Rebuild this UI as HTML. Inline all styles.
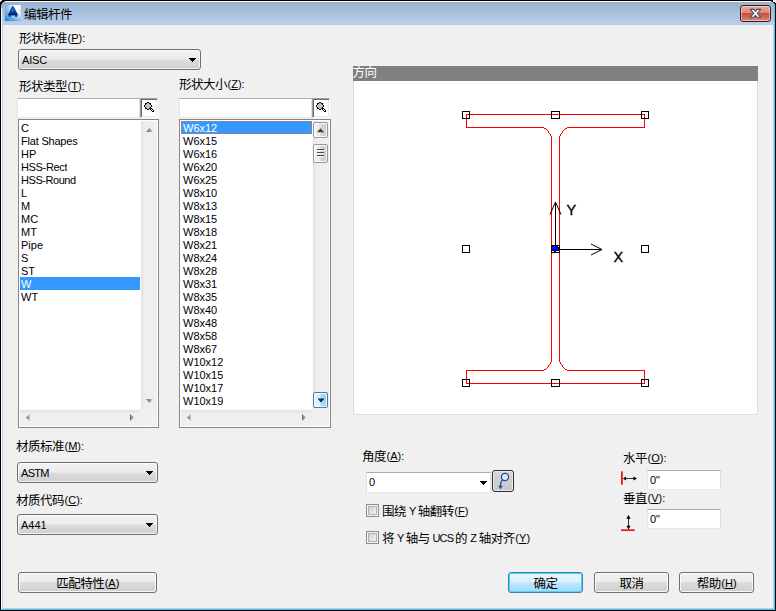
<!DOCTYPE html>
<html lang="zh-CN">
<head>
<meta charset="utf-8">
<title>编辑杆件</title>
<style>
*{box-sizing:border-box;margin:0;padding:0}
html,body{width:776px;height:611px;overflow:hidden;background:#000}
body{position:relative;font-family:"Liberation Sans","Noto Sans CJK SC",sans-serif;font-size:12px;color:#000;line-height:1}
.abs{position:absolute}
#win{position:absolute;left:0;top:0;width:776px;height:611px;background:#000;overflow:hidden}
#frame{position:absolute;left:1px;top:1px;width:774px;height:609px;background:#b9d1ea;border-radius:6px 6px 0 0;overflow:hidden}
#titlebar{position:absolute;left:0;top:0;width:774px;height:24px;background:linear-gradient(#ffffff 0,#ffffff 1px,#98b3d0 1px,#b9d1ea 24px)}
#client{position:absolute;left:3px;top:25px;width:770px;height:583px;background:#f0f0f0}
.lbl{position:absolute;white-space:nowrap;font-size:12.5px;letter-spacing:-.5px;line-height:14px;height:14px}
.lbl u{text-decoration:underline;text-underline-offset:1px}
b{font-weight:normal;font-size:11px;letter-spacing:0;position:relative;top:-1px;left:.5px}
.t11{font-size:11px}
.combo{position:absolute;border:1px solid #707070;border-radius:3px;background:linear-gradient(#f2f2f2 0,#ebebeb 48%,#dddddd 52%,#cfcfcf 100%);box-shadow:inset 0 0 0 1px rgba(255,255,255,.75)}
.combo span{position:absolute;left:3px;top:4px;font-size:11px;line-height:13px}
.combo i,.edit i{position:absolute;right:7px;top:11px;width:1px;height:1px;background:#000;box-shadow:-3px -3px 0 #000,-2px -3px 0 #000,-1px -3px 0 #000,0px -3px 0 #000,1px -3px 0 #000,2px -3px 0 #000,3px -3px 0 #000,-2px -2px 0 #000,-1px -2px 0 #000,0px -2px 0 #000,1px -2px 0 #000,2px -2px 0 #000,-1px -1px 0 #000,0px -1px 0 #000,1px -1px 0 #000}
.btn{position:absolute;border:1px solid #707070;border-radius:3px;background:linear-gradient(#f2f2f2 0,#ebebeb 47%,#dddddd 48%,#cfcfcf 100%);box-shadow:inset 0 0 0 1px rgba(255,255,255,.8);text-align:center;font-size:12.5px;letter-spacing:-.5px;line-height:19px;padding-top:2px;white-space:nowrap}
.btn.def{border-color:#3c7fb1;background:linear-gradient(#eaf6fd 0,#d9f0fc 48%,#bee6fd 52%,#a7d9f5 100%);box-shadow:inset 0 0 0 1px #48d8fb}
.edit{position:absolute;background:#fff;border:1px solid #e3e9ef;border-top-color:#abadb3;border-left-color:#e2e3ea;border-right-color:#dbdfe6}
.sbtn{position:absolute;background:#fff;border-left:1px solid #a0a0a0;border-top:1px solid #a0a0a0;border-right:1px solid #fff;border-bottom:1px solid #fff;box-shadow:inset 1px 1px 0 #696969,inset -1px -1px 0 #e9e9e9}
.list{position:absolute;background:#fff;border:1px solid #828790;overflow:hidden}
.list .it{position:absolute;left:1px;height:13px;font-size:11px;line-height:15px;padding-left:2px;white-space:nowrap;overflow:hidden}
#list1 .it{padding-left:1px}
.list .sel{background:#3399ff;color:#fff}
.vtrack{position:absolute;background:linear-gradient(90deg,#fbfbfb 0,#fbfbfb 1px,#e3e3e3 1px,#eeeeee 5px,#f0f0f0 100%)}
.htrack{position:absolute;background:linear-gradient(#fbfbfb 0,#fbfbfb 1px,#e3e3e3 1px,#eeeeee 5px,#f0f0f0 100%)}
.scb{position:absolute;border:1px solid #979797;border-radius:2px;background:linear-gradient(90deg,#f3f3f3 0,#e8e8e8 48%,#d6d6d6 52%,#cbcbcb 100%);box-shadow:inset 0 0 0 1px rgba(255,255,255,.85)}
.scb.hot{border-color:#3c7fb1;background:linear-gradient(90deg,#e3f4fc 0,#d6effc 48%,#a9dbf6 52%,#9cd3f1 100%)}
.cb{position:absolute;width:13px;height:13px;border:1px solid #8e8f8f;background:#f4f4f4;box-shadow:inset 0 0 0 1px #f4f4f4,inset 0 0 0 2px #aeb3b9}
.cb:after{content:"";position:absolute;left:2px;top:2px;width:7px;height:7px;background:linear-gradient(135deg,#cfd0d2 0,#f3f3f3 100%)}
svg{position:absolute;overflow:visible}
</style>
</head>
<body>
<div id="win">
<div class="abs" style="left:0;top:0;width:2px;height:1px;background:#e8e8e8"></div><div class="abs" style="left:0;top:1px;width:1px;height:1px;background:#e8e8e8"></div><div class="abs" style="left:773px;top:0;width:3px;height:2px;background:#f4f4f4"></div><div class="abs" style="left:775px;top:2px;width:1px;height:1px;background:#e8e8e8"></div>
<div id="frame">
<div id="titlebar"></div>
</div>
<div class="abs" style="left:774px;top:4px;width:1px;height:606px;background:#3ec9f6"></div>
<div class="abs" style="left:1px;top:609px;width:774px;height:1px;background:#2fd0f2"></div>
<div class="abs" style="left:1px;top:8px;width:1px;height:601px;background:#fdfeff"></div>
<div id="client"></div>

<!-- title -->
<svg id="appicon" style="left:5px;top:5px" width="16" height="16" viewBox="0 0 16 16">
<defs><linearGradient id="ig" x1="0" y1="0" x2="1" y2=".25"><stop offset="0" stop-color="#6d90c0"/><stop offset=".5" stop-color="#f4f8fd"/><stop offset=".8" stop-color="#ffffff"/><stop offset="1" stop-color="#dbe8f7"/></linearGradient>
<linearGradient id="ig2" x1="0" y1="1" x2=".75" y2="0"><stop offset="0" stop-color="#127ad6"/><stop offset=".3" stop-color="#4f9fe2" stop-opacity=".85"/><stop offset=".62" stop-color="#9cc6ee" stop-opacity=".35"/><stop offset=".8" stop-color="#ffffff" stop-opacity="0"/></linearGradient>
<linearGradient id="ig3" x1="0" y1="0" x2="0" y2="1"><stop offset=".6" stop-color="#a9cbee" stop-opacity="0"/><stop offset="1" stop-color="#8fbdea" stop-opacity=".9"/></linearGradient>
<linearGradient id="ag" x1="0" y1="0" x2="0" y2="1"><stop offset="0" stop-color="#0f62bd"/><stop offset=".45" stop-color="#0a47a3"/><stop offset=".8" stop-color="#071f55"/><stop offset=".84" stop-color="#0a3f9c"/><stop offset="1" stop-color="#0d55b8"/></linearGradient></defs>
<rect width="16" height="16" fill="url(#ig)"/><rect width="16" height="16" fill="url(#ig3)"/><rect width="16" height="16" fill="url(#ig2)"/>
<path d="M7.8 1Q8.6 1 9 2L13 10.1L12.4 10.4L11.9 12L10.2 12L9.9 10.6L6 10.6L5.8 12L4.1 12L3.6 10.4L3 10.1L6.6 2Q7 1 7.8 1Z" fill="url(#ag)"/>
<ellipse cx="7.7" cy="5.6" rx=".7" ry="1.9" fill="#2f9ae2" opacity=".75"/>
</svg>
<div class="lbl" style="left:24px;top:8px">编辑杆件</div>
<!-- close button -->
<div class="abs" style="left:740px;top:5px;width:31px;height:17px;border:1px solid #4a1420;border-radius:3px;background:linear-gradient(#e9a99b 0,#d98875 45%,#c3503a 50%,#cd6f5c 80%,#d98f7c 100%);box-shadow:inset 0 0 0 1px rgba(255,255,255,.45)"></div>
<svg style="left:749px;top:8px" width="13" height="11" viewBox="0 0 13 11"><path d="M1.2 1.4h3.7l1.6 1.9 1.6-1.9h3.7L8.3 5.3l3.6 4h-3.8l-1.6-2-1.6 2H1.1l3.6-4Z" fill="#fff" stroke="#45536a" stroke-width="1.1" stroke-linejoin="round"/></svg>

<!-- left column -->
<div class="lbl" style="left:19px;top:32px">形状标准<b>(<u>P</u>):</b></div>
<div class="combo" style="left:18px;top:49px;width:183px;height:21px"><span style="letter-spacing:-.2px">AISC</span><i></i></div>

<div class="lbl" style="left:19px;top:80px">形状类型<b>(<u>T</u>):</b></div>
<div class="lbl" style="left:179px;top:78px">形状大小<b>(<u>Z</u>):</b></div>

<div class="edit" style="left:17px;top:98px;width:123px;height:20px"></div>
<div class="sbtn" style="left:140px;top:98px;width:18px;height:20px"></div>
<svg class="mag" style="left:144px;top:102px" width="11" height="11" viewBox="0 0 11 11" shape-rendering="crispEdges"><path d="M3 0h2v1h-2zM1 1h2v1h-2zM5 1h2v1h-2zM1 2h1v1h-1zM6 2h1v1h-1zM0 3h1v1h-1zM7 3h1v1h-1zM0 4h1v1h-1zM7 4h1v1h-1zM1 5h1v1h-1zM6 5h1v1h-1zM1 6h2v1h-2zM5 6h3v1h-3zM3 7h2v1h-2zM6 7h1v1h-1zM8 7h1v1h-1zM7 8h1v1h-1zM9 8h1v1h-1zM8 9h2v1h-2z" fill="#000"/><path d="M3 1h2v1h-2zM2 2h4v1h-4zM1 3h6v1h-6zM1 4h6v1h-6zM2 5h4v1h-4zM3 6h2v1h-2z" fill="#c0c0c0"/><path d="M7 7h1v1h-1zM8 8h1v1h-1z" fill="#fff"/></svg>

<div class="edit" style="left:179px;top:98px;width:133px;height:20px"></div>
<div class="sbtn" style="left:312px;top:98px;width:18px;height:20px"></div>
<svg class="mag" style="left:316px;top:102px" width="11" height="11" viewBox="0 0 11 11" shape-rendering="crispEdges"><path d="M3 0h2v1h-2zM1 1h2v1h-2zM5 1h2v1h-2zM1 2h1v1h-1zM6 2h1v1h-1zM0 3h1v1h-1zM7 3h1v1h-1zM0 4h1v1h-1zM7 4h1v1h-1zM1 5h1v1h-1zM6 5h1v1h-1zM1 6h2v1h-2zM5 6h3v1h-3zM3 7h2v1h-2zM6 7h1v1h-1zM8 7h1v1h-1zM7 8h1v1h-1zM9 8h1v1h-1zM8 9h2v1h-2z" fill="#000"/><path d="M3 1h2v1h-2zM2 2h4v1h-4zM1 3h6v1h-6zM1 4h6v1h-6zM2 5h4v1h-4zM3 6h2v1h-2z" fill="#c0c0c0"/><path d="M7 7h1v1h-1zM8 8h1v1h-1z" fill="#fff"/></svg>

<!-- list 1 -->
<div class="list" id="list1" style="left:18px;top:119px;width:141px;height:309px">
<div class="it" style="top:1px">C</div>
<div class="it" style="top:14px;letter-spacing:-.2px">Flat Shapes</div>
<div class="it" style="top:27px">HP</div>
<div class="it" style="top:40px;letter-spacing:-.35px">HSS-Rect</div>
<div class="it" style="top:53px;letter-spacing:-.45px">HSS-Round</div>
<div class="it" style="top:66px">L</div>
<div class="it" style="top:79px">M</div>
<div class="it" style="top:92px">MC</div>
<div class="it" style="top:105px">MT</div>
<div class="it" style="top:118px">Pipe</div>
<div class="it" style="top:131px">S</div>
<div class="it" style="top:144px">ST</div>
<div class="it sel" style="top:157px;width:120px">W</div>
<div class="it" style="top:170px">WT</div>
<div class="vtrack" style="left:121px;top:1px;width:17px;height:288px"></div>
<div class="htrack" style="left:1px;top:289px;width:120px;height:17px"></div>
<div class="abs" style="left:121px;top:289px;width:17px;height:17px;background:#f0f0f0"></div>
<svg style="left:0;top:0" width="139" height="307">
<defs><linearGradient id="ga"><stop offset="0" stop-color="#686868"/><stop offset="1" stop-color="#c2c2c2"/></linearGradient></defs>
<path d="M127 12l3.5-4 3.5 4z" fill="url(#ga)"/>
<path d="M127 279l3.5 4 3.5-4z" fill="url(#ga)"/>
<path d="M11 294l-4 3.5 4 3.5z" fill="url(#ga)"/>
<path d="M111 294l4 3.5-4 3.5z" fill="url(#ga)"/>
</svg>
</div>

<!-- list 2 -->
<div class="list" id="list2" style="left:179px;top:119px;width:152px;height:309px">
<div class="it sel" style="top:1px;width:131px;outline:1px dotted #e07820;outline-offset:-1px">W6x12</div>
<div class="it" style="top:14px">W6x15</div>
<div class="it" style="top:27px">W6x16</div>
<div class="it" style="top:40px">W6x20</div>
<div class="it" style="top:53px">W6x25</div>
<div class="it" style="top:66px">W8x10</div>
<div class="it" style="top:79px">W8x13</div>
<div class="it" style="top:92px">W8x15</div>
<div class="it" style="top:105px">W8x18</div>
<div class="it" style="top:118px">W8x21</div>
<div class="it" style="top:131px">W8x24</div>
<div class="it" style="top:144px">W8x28</div>
<div class="it" style="top:157px">W8x31</div>
<div class="it" style="top:170px">W8x35</div>
<div class="it" style="top:183px">W8x40</div>
<div class="it" style="top:196px">W8x48</div>
<div class="it" style="top:209px">W8x58</div>
<div class="it" style="top:222px">W8x67</div>
<div class="it" style="top:235px">W10x12</div>
<div class="it" style="top:248px">W10x15</div>
<div class="it" style="top:261px">W10x17</div>
<div class="it" style="top:274px">W10x19</div>
<div class="vtrack" style="left:132px;top:1px;width:17px;height:288px"></div>
<div class="htrack" style="left:1px;top:289px;width:131px;height:17px"></div>
<div class="abs" style="left:132px;top:289px;width:17px;height:17px;background:#f0f0f0"></div>
<div class="scb" style="left:133px;top:2px;width:15px;height:16px"></div>
<div class="scb" style="left:133px;top:24px;width:15px;height:19px"></div>
<div class="scb hot" style="left:133px;top:272px;width:15px;height:16px"></div>
<svg style="left:0;top:0" width="150" height="307">
<path d="M137 12.2l3.5-4 3.5 4z" fill="#3c3c3c"/>
<path d="M137 29.5h7M137 32.5h7M137 35.5h7" stroke="#4c4c4c" stroke-width="1"/>
<path d="M137 30.5h7M137 33.5h7M137 36.5h7" stroke="#fff" stroke-width="1" opacity=".7"/>
<path d="M137.5 278.5l3.5 4 3.5-4z" fill="#0c2d4e"/>
<path d="M11 294l-4 3.5 4 3.5z" fill="url(#ga)"/>
<path d="M122 294l4 3.5-4 3.5z" fill="url(#ga)"/>
</svg>
</div>

<div class="lbl" style="left:16px;top:440px">材质标准<b>(<u>M</u>):</b></div>
<div class="combo" style="left:17px;top:462px;width:141px;height:21px"><span style="letter-spacing:-.7px">ASTM</span><i></i></div>
<div class="lbl" style="left:16px;top:494px">材质代码<b>(<u>C</u>):</b></div>
<div class="combo" style="left:17px;top:514px;width:141px;height:21px"><span>A441</span><i></i></div>
<div class="btn" style="left:18px;top:572px;width:139px;height:21px">匹配特性<b>(<u>A</u>)</b></div>

<!-- preview -->
<div class="abs" style="left:353px;top:81px;width:405px;height:334px;background:#fff;border:1px solid #d5dfe5;border-top:0;border-radius:0 0 3px 3px"></div>
<div class="abs" style="left:353px;top:66px;width:405px;height:15px;background:#808080;overflow:hidden"><div class="lbl" style="left:-.5px;top:0;color:#fff">方向</div></div>
<svg id="beam" style="left:353px;top:81px" width="405" height="334" viewBox="353 81 405 334" shape-rendering="crispEdges">
<path d="M466 114h179v1h-179zM466 114h1v14h-1zM644 114h1v14h-1zM466 127h78v1h-78zM567 127h78v1h-78zM551 136h1v226h-1zM559 136h1v226h-1zM466 370h78v1h-78zM567 370h78v1h-78zM466 370h1v14h-1zM644 370h1v14h-1zM466 383h179v1h-179zM544 128h2v1h-2zM565 128h2v1h-2zM544 369h2v1h-2zM565 369h2v1h-2zM546 129h1v1h-1zM564 129h1v1h-1zM546 368h1v1h-1zM564 368h1v1h-1zM547 130h1v1h-1zM563 130h1v1h-1zM547 367h1v1h-1zM563 367h1v1h-1zM548 131h1v2h-1zM562 131h1v2h-1zM548 365h1v2h-1zM562 365h1v2h-1zM549 133h1v1h-1zM561 133h1v1h-1zM549 364h1v1h-1zM561 364h1v1h-1zM550 134h1v2h-1zM560 134h1v2h-1zM550 362h1v2h-1zM560 362h1v2h-1z" fill="#ff0000"/>
<g fill="none" stroke="#000" stroke-width="1">
<rect x="462.5" y="111.5" width="7" height="7"/><rect x="551.5" y="111.5" width="8" height="7"/><rect x="641.5" y="111.5" width="7" height="7"/>
<rect x="462.5" y="245.5" width="7" height="7"/><rect x="641.5" y="245.5" width="7" height="7"/>
<rect x="462.5" y="379.5" width="7" height="7"/><rect x="551.5" y="379.5" width="8" height="7"/><rect x="641.5" y="379.5" width="7" height="7"/>
</g>
<rect x="551.5" y="245.5" width="8" height="7" fill="#fff" stroke="#000"/>
<path d="M555.5 202V249.5H602" fill="none" stroke="#000"/>
<rect x="552" y="246" width="7" height="5" fill="#000"/><rect x="552" y="247" width="6" height="3" fill="#0000ff"/><rect x="554" y="246" width="3" height="5" fill="#0000ff"/><rect x="558" y="246" width="1" height="1" fill="#fff"/><rect x="554" y="251" width="2" height="1" fill="#000"/>
<g shape-rendering="auto" fill="none" stroke="#000" stroke-width="1"><path d="M550 214.5L555.5 202L561 214.5"/><path d="M591 244L602 249.5L591 255"/></g>
<text x="566.5" y="215" font-family="Liberation Sans, sans-serif" font-size="14.5" fill="#000" stroke="#000" stroke-width=".35" shape-rendering="auto">Y</text>
<text x="613.5" y="262" font-family="Liberation Sans, sans-serif" font-size="14.5" fill="#000" stroke="#000" stroke-width=".35" shape-rendering="auto">X</text>
</svg>

<!-- angle -->
<div class="lbl" style="left:362px;top:450px">角度<b>(<u>A</u>):</b></div>
<div class="edit" style="left:366px;top:472px;width:125px;height:21px"><span class="abs t11" style="left:2px;top:4px;line-height:11px">0</span><i style="left:116px;top:11px"></i></div>
<div class="abs" style="left:492px;top:470px;width:22px;height:22px;border:1px solid #2e2e2e;border-radius:3px;background:linear-gradient(#d6d6d6,#c6c6c6);box-shadow:inset 0 0 0 1px #ebebeb"></div>
<svg style="left:492px;top:470px" width="22" height="22" viewBox="0 0 22 22"><circle cx="13" cy="7" r="3.6" fill="#dfe8f1" stroke="#1d4f9e" stroke-width="1.3"/><path d="M10.3 9.8Q8.2 12.5 8.4 17" fill="none" stroke="#1d4f9e" stroke-width="1.2"/><path d="M6.2 15.8h4.6L8.5 19.2z" fill="#1d4f9e"/></svg>

<div class="cb" style="left:366px;top:504px"></div>
<div class="lbl" style="left:382px;top:505px">围绕<b style="letter-spacing:-.5px"> Y </b>轴翻转<b>(<u>F</u>)</b></div>
<div class="cb" style="left:366px;top:531px"></div>
<div class="lbl" style="left:382px;top:532px">将<b style="letter-spacing:-.5px"> Y </b>轴与<b style="letter-spacing:-.85px"> UCS </b>的<b style="letter-spacing:-.3px"> Z </b>轴对齐<b>(<u>Y</u>)</b></div>

<!-- offsets -->
<div class="lbl" style="left:623px;top:452px">水平<b>(<u>O</u>):</b></div>
<div class="edit" style="left:647px;top:470px;width:74px;height:20px"><span class="abs t11" style="left:2px;top:4px;line-height:11px">0"</span></div>
<div class="lbl" style="left:623px;top:492px">垂直<b>(<u>V</u>):</b></div>
<div class="edit" style="left:647px;top:509px;width:74px;height:20px"><span class="abs t11" style="left:2px;top:4px;line-height:11px">0"</span></div>
<svg style="left:620px;top:470px" width="20" height="64" viewBox="620 470 20 64">
<rect x="621" y="471.4" width="1.8" height="13.2" fill="#f01418"/>
<path d="M625 478.5h9" stroke="#333" stroke-width="1"/><path d="M622.9 478.5l3.1-1.9v3.8zM637 478.5l-3.6-2.1v4.2z" fill="#000"/>
<rect x="621" y="529.3" width="13.6" height="1.7" fill="#f01418"/>
<path d="M628.5 518v9" stroke="#333" stroke-width="1"/><path d="M628.5 515l-2.2 3.8h4.4zM628.5 529.4l-2.1-3.7h4.2z" fill="#000"/>
</svg>

<div class="btn def" style="left:508px;top:572px;width:75px;height:21px">确定</div>
<div class="btn" style="left:594px;top:572px;width:75px;height:21px">取消</div>
<div class="btn" style="left:679px;top:572px;width:75px;height:21px">帮助<b>(<u>H</u>)</b></div>
</div>
</body>
</html>
